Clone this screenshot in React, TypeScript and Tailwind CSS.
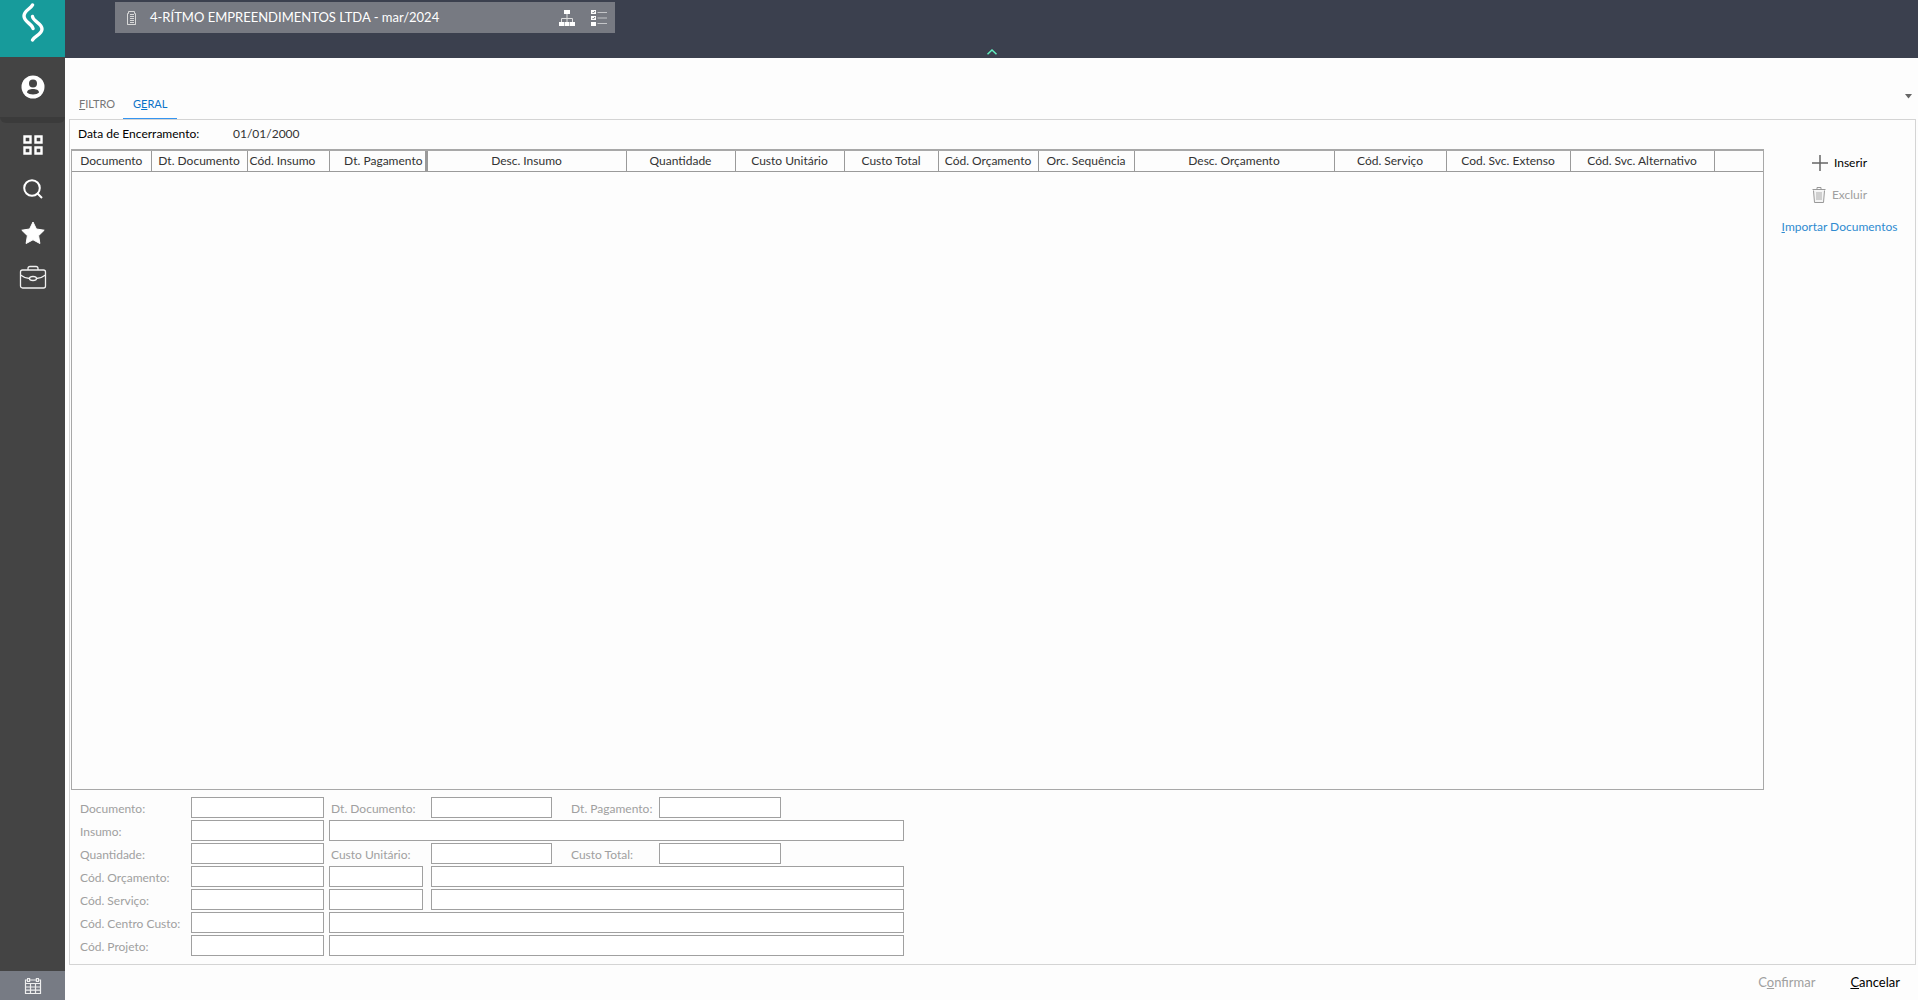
import { Fragment, useState } from "react";
import type { ReactNode } from "react";

const columns = [
  { label: "Documento", width: "w-[79px]" },
  { label: "Dt. Documento", width: "w-[96px]" },
  { label: "Cód. Insumo", width: "w-[82px]", align: "text-left pl-0.5" },
  { label: "Dt. Pagamento", width: "w-[97px]", align: "text-right pr-0.5 border-r-3" },
  { label: "Desc. Insumo", width: "w-[200px]" },
  { label: "Quantidade", width: "w-[109px]" },
  { label: "Custo Unitário", width: "w-[109px]" },
  { label: "Custo Total", width: "w-[94px]" },
  { label: "Cód. Orçamento", width: "w-[100px]" },
  { label: "Orc. Sequência", width: "w-[96px]" },
  { label: "Desc. Orçamento", width: "w-[200px]" },
  { label: "Cód. Serviço", width: "w-[112px]" },
  { label: "Cod. Svc. Extenso", width: "w-[124px]" },
  { label: "Cód. Svc. Alternativo", width: "w-[144px]" },
];

type Extra = { label?: string; labelWidth?: string; name: string; width: string };

const rows: { label: string; id: string; extras: Extra[] }[] = [
  {
    label: "Documento:",
    id: "documento",
    extras: [
      { label: "Dt. Documento:", labelWidth: "w-[102px]", name: "dt-documento", width: "w-[121px]" },
      { label: "Dt. Pagamento:", labelWidth: "w-[107px] pl-[19px]", name: "dt-pagamento", width: "w-[122px]" },
    ],
  },
  { label: "Insumo:", id: "insumo", extras: [{ name: "Descrição do insumo", width: "flex-1" }] },
  {
    label: "Quantidade:",
    id: "quantidade",
    extras: [
      { label: "Custo Unitário:", labelWidth: "w-[102px]", name: "custo-unitario", width: "w-[121px]" },
      { label: "Custo Total:", labelWidth: "w-[107px] pl-[19px]", name: "custo-total", width: "w-[122px]" },
    ],
  },
  {
    label: "Cód. Orçamento:",
    id: "orcamento",
    extras: [
      { name: "Sequência do orçamento", width: "w-[94px] mr-2" },
      { name: "Descrição do orçamento", width: "flex-1" },
    ],
  },
  {
    label: "Cód. Serviço:",
    id: "servico",
    extras: [
      { name: "Serviço extenso", width: "w-[94px] mr-2" },
      { name: "Descrição do serviço", width: "flex-1" },
    ],
  },
  { label: "Cód. Centro Custo:", id: "centro-custo", extras: [{ name: "Descrição do centro de custo", width: "flex-1" }] },
  { label: "Cód. Projeto:", id: "projeto", extras: [{ name: "Descrição do projeto", width: "flex-1" }] },
];

const inputClass = "h-[21px] min-w-0 border border-[#a0a0a0] bg-white px-1 outline-none";

function SideButton({ label, children }: { label: string; children: ReactNode }) {
  return (
    <button aria-label={label} className="flex h-11 w-full items-center justify-center text-white">
      {children}
    </button>
  );
}

function Sidebar() {
  return (
    <aside className="flex w-[65px] shrink-0 flex-col bg-[#444444]">
      <div className="flex h-[57px] justify-center bg-[#179b9b] pt-[3px]">
        <svg width="24" height="40" viewBox="0 0 24 40" fill="none" stroke="#fff" strokeWidth="3.4" strokeLinecap="round" strokeLinejoin="round">
          <path d="M11.500 2C9.500 6 3 7.500 3 13C3 19 11 20.500 12 25.500" />
          <path d="M11.500 13.500C12.500 19 21 20 21 26C21 31.500 13.500 33 11.500 37" />
        </svg>
      </div>

      <div className="flex h-[60px] items-center justify-center">
        <button aria-label="Usuário">
          <svg width="24" height="24" viewBox="0 0 24 24">
            <circle cx="12" cy="12" r="11.500" fill="#fff" />
            <circle cx="12" cy="8.500" r="4" fill="#444" />
            <path d="M6 17.500C6 15 9 14 12 14S18 15 18 17.500C16 20 8 20 6 17.500Z" fill="#444" />
          </svg>
        </button>
      </div>
      <div className="h-[6px] rounded-b-lg bg-[#3b3b3b]" />

      <nav className="flex flex-1 flex-col">
        <SideButton label="Módulos">
          <svg width="20" height="20" viewBox="0 0 20 20" fill="none" stroke="#fff" strokeWidth="2.400">
            <path d="M1.500 1.500h6v6h-6zM12.500 1.500h6v6h-6zM1.500 12.500h6v6h-6zM12.500 12.500h6v6h-6z" />
          </svg>
        </SideButton>
        <SideButton label="Pesquisar">
          <svg width="20" height="20" viewBox="0 0 20 20" fill="none" stroke="#fff" strokeWidth="2">
            <circle cx="9" cy="9" r="7.800" />
            <path d="M14.500 14.500L19 19" />
          </svg>
        </SideButton>
        <SideButton label="Favoritos">
          <svg width="24" height="24" viewBox="0 0 24 24" fill="#fff" stroke="#fff" strokeWidth="1" strokeLinejoin="round">
            <path d="M12 1L15.400 8L23.200 9.200L17.600 14.700L18.900 22.500L12 18.800L5.100 22.500L6.400 14.700L0.800 9.200L8.600 8Z" />
          </svg>
        </SideButton>
        <SideButton label="Empresa">
          <svg width="28" height="24" viewBox="0 0 28 24" fill="none" stroke="#f0f0f0" strokeWidth="1.300">
            <rect x="1.500" y="5" width="25" height="18" rx="2" />
            <path d="M9 5V3.500Q9 1.500 11 1.500H17Q19 1.500 19 3.500V5M1.500 10Q6 13.500 10.500 13.500M26.500 10Q22 13.500 17.500 13.500" />
            <ellipse cx="14" cy="13.500" rx="3.500" ry="2" />
          </svg>
        </SideButton>
      </nav>

      <button aria-label="Calendário" className="flex h-[29px] items-center justify-center bg-[#777b84]">
        <svg width="18" height="18" viewBox="0 0 18 18" fill="none" stroke="#eee" strokeWidth="1.200">
          <path d="M3.500 3H1.500V16.500H16.500V3H14.500M6 3H12M1.500 6.500H16.500M1.500 10H16.500M1.500 13.200H16.500M6.500 6.500V16.500M11.500 6.500V16.500" />
          <path d="M3.600 1.500h2v3h-2zM12.400 1.500h2v3h-2z" />
        </svg>
      </button>
    </aside>
  );
}

function TopBar() {
  return (
    <header className="flex h-[58px] shrink-0 flex-col justify-between bg-[#3b404e] pt-0.5">
      <div className="ml-[50px] flex h-[31px] w-[500px] items-center bg-[#777a82] pr-2 pl-3 text-white">
        <svg width="9" height="14" viewBox="0 0 9 14" fill="none" stroke="#d8d8d8" strokeWidth="1">
          <path d="M.5 13.500V2.500H1.500V.5H7.500V2.500H8.500V13.500ZM.5 13.500H8.500M3 3.500H7M3 5.500H7M3 7.500H7M3 9.500H7M3 11.500H7" />
        </svg>
        <span className="ml-3.5 flex-1 text-[13px]">4-RÍTMO EMPREENDIMENTOS LTDA - mar/2024</span>
        <button aria-label="Organograma" className="mr-4">
          <svg width="16" height="16" viewBox="0 0 16 16" fill="#fff">
            <path d="M5 0h6v4H5zM0 12h5v4H0zM5.500 12h5v4h-5zM11 12h5v4h-5z" />
            <path d="M8 4v8M2.500 12V8.500h11V12" fill="none" stroke="#ddd" />
          </svg>
        </button>
        <button aria-label="Lista">
          <svg width="16" height="16" viewBox="0 0 16 16">
            <path d="M0 0h5v4H0zM0 6h5v4H0zM0 12h5v4H0z" fill="#fff" />
            <path d="M1.500 2l1 1 1.500-2M1.500 8l1 1 1.500-2" fill="none" stroke="#777a82" />
            <path d="M6.500 2.500h9.500M6.500 8h9.500M6.500 13.500h9.500" stroke="#c4c5c8" />
          </svg>
        </button>
      </div>
      <button aria-label="Recolher" className="mb-[3px] self-center">
        <svg width="10" height="6" viewBox="0 0 10 6" fill="none" stroke="#62efc0" strokeWidth="1.500">
          <path d="M.5 5.200L5 1L9.500 5.200" />
        </svg>
      </button>
    </header>
  );
}

function DocumentsTable() {
  return (
    <div className="flex-1 border border-t-2 border-[#a8a8a8]">
      <table className="w-full table-fixed border-collapse">
        <thead>
          <tr className="h-5 border-b border-[#9a9a9a]">
            {columns.map((c) => (
              <th
                key={c.label}
                className={`border-r border-[#9a9a9a] p-0 text-xs font-normal whitespace-nowrap text-[#333] ${c.width} ${c.align ?? "text-center"}`}
              >
                {c.label}
              </th>
            ))}
            <th aria-label="Vazio" />
          </tr>
        </thead>
        <tbody />
      </table>
    </div>
  );
}

function DetailForm() {
  return (
    <form className="mt-[7px] flex w-[834px] flex-col gap-0.5 text-xs text-[#a0a0a0]">
      {rows.map((row) => (
        <div key={row.id} className="flex items-center">
          <label htmlFor={row.id} className="w-[121px] pt-0.5 pl-2.5">
            {row.label}
          </label>
          <input id={row.id} className={`${inputClass} mr-[5px] w-[133px]`} />
          {row.extras.map((e) => (
            <Fragment key={e.name}>
              {e.label && (
                <label htmlFor={e.name} className={`pt-0.5 pl-0.5 ${e.labelWidth}`}>
                  {e.label}
                </label>
              )}
              <input id={e.name} aria-label={e.label ? undefined : e.name} className={`${inputClass} ${e.width}`} />
            </Fragment>
          ))}
        </div>
      ))}
    </form>
  );
}

function Actions() {
  return (
    <div className="flex w-[151px] shrink-0 flex-col items-center gap-4 pt-1.5 text-xs">
      <button className="flex h-4 items-center gap-1.5 text-black">
        <svg width="16" height="16" viewBox="0 0 16 16" stroke="#666" strokeWidth="1.500">
          <path d="M8 0V16M0 8H16" />
        </svg>
        Inserir
      </button>
      <button className="flex h-4 items-center gap-1.5 text-[#a0a0a0]">
        <svg width="14" height="16" viewBox="0 0 14 16" fill="none" stroke="#999">
          <path d="M1.500 3.500L2.500 15.500H11.500L12.500 3.500" fill="#f4f4f4" />
          <path d="M.5 2.500H13.500M5 2.500V.5H9V2.500" />
          <path d="M5 5V13M7 5V13M9 5V13" stroke="#aaa" />
        </svg>
        Excluir
      </button>
      <a href="#" className="flex h-4 items-center text-[#2f8bd0]">
        <u>I</u>mportar Documentos
      </a>
    </div>
  );
}

export default function App() {
  const [tab, setTab] = useState("geral");

  const tabClass = (name: string) =>
    `h-[26px] border-b-2 pb-1 text-[11px] ${
      tab === name ? "border-[#3595f0] text-[#0a74c8]" : "border-transparent text-[#777]"
    }`;

  return (
    <div className="flex min-h-screen bg-[#fdfdfd] font-[Lato,Carlito,sans-serif]">
      <Sidebar />

      <div className="flex min-w-0 flex-1 flex-col">
        <TopBar />

        <main className="flex flex-1 flex-col pr-[2px] pl-1">
          {/* Tabs */}
          <div className="flex h-[61px] items-end justify-between">
            <div className="-mb-px flex">
              <button onClick={() => setTab("filtro")} className={`${tabClass("filtro")} pr-2 pl-2.5`}>
                <u>F</u>ILTRO
              </button>
              <button onClick={() => setTab("geral")} className={`${tabClass("geral")} px-2.5`}>
                G<u>E</u>RAL
              </button>
            </div>
            <button aria-label="Mais opções" className="mr-1 mb-5">
              <svg width="7" height="5" viewBox="0 0 7 5" fill="#666">
                <path d="M0 0H7L3.500 4.500Z" />
              </svg>
            </button>
          </div>

          <section className="flex flex-1 flex-col border border-[#d4d4d4] pb-2">
            <div className="flex h-[29px] items-center pb-0.5 pl-2 text-xs text-black">
              <span className="w-[155px]">Data de Encerramento:</span>
              <span className="text-[#333]">01/01/2000</span>
            </div>

            <div className="flex flex-1 pl-px">
              <DocumentsTable />
              <Actions />
            </div>

            <DetailForm />
          </section>

          {/* Footer */}
          <footer className="flex h-[35px] items-center justify-end gap-[35px] pr-4 text-[13px]">
            <button className="text-[#a0a0a0]">
              C<u>o</u>nfirmar
            </button>
            <button className="text-black">
              <u>C</u>ancelar
            </button>
          </footer>
        </main>
      </div>
    </div>
  );
}
